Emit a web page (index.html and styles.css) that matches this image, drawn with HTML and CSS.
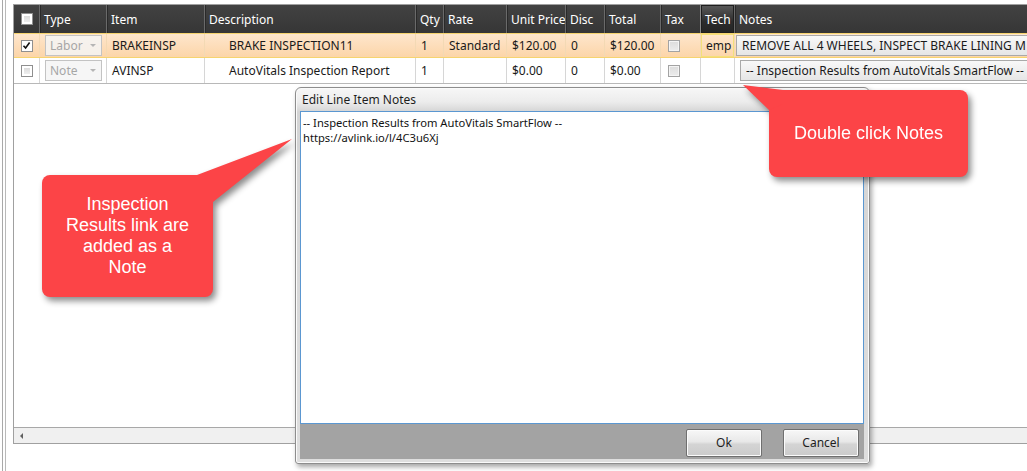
FILE: index.html
```html
<!DOCTYPE html>
<html>
<head>
  <title>Line Items - Edit Notes</title>
  <link rel="stylesheet" href="styles.css">
</head>
<body>
<div class="frame">
  <div class="frame-inner">
    <div class="grid">
      <div class="row head">
        <div class="cell"><span class="chk"></span></div>
        <div class="cell">Type</div>
        <div class="cell">Item</div>
        <div class="cell">Description</div>
        <div class="cell">Qty</div>
        <div class="cell">Rate</div>
        <div class="cell">Unit Price</div>
        <div class="cell">Disc</div>
        <div class="cell">Total</div>
        <div class="cell">Tax</div>
        <div class="cell tech">Tech</div>
        <div class="cell">Notes</div>
      </div>

      <div class="row line selected">
        <div class="cell center">
          <span class="chk checked">
            <svg width="9" height="9" viewBox="0 0 9 9"><path d="M1.5 4.8 L3.6 7 L7.6 1.6" fill="none" stroke="#111" stroke-width="1.6"/></svg>
          </span>
        </div>
        <div class="cell"><span class="combo">Labor</span></div>
        <div class="cell">BRAKEINSP</div>
        <div class="cell desc">BRAKE INSPECTION11</div>
        <div class="cell">1</div>
        <div class="cell">Standard</div>
        <div class="cell">$120.00</div>
        <div class="cell">0</div>
        <div class="cell">$120.00</div>
        <div class="cell"><span class="chk tax"></span></div>
        <div class="cell tech-val">emp</div>
        <div class="cell notes first"><span class="note-btn">REMOVE ALL 4 WHEELS, INSPECT BRAKE LINING M</span></div>
      </div>

      <div class="row line">
        <div class="cell center"><span class="chk"></span></div>
        <div class="cell"><span class="combo">Note</span></div>
        <div class="cell">AVINSP</div>
        <div class="cell desc">AutoVitals Inspection Report</div>
        <div class="cell">1</div>
        <div class="cell"></div>
        <div class="cell">$0.00</div>
        <div class="cell">0</div>
        <div class="cell">$0.00</div>
        <div class="cell"><span class="chk tax"></span></div>
        <div class="cell"></div>
        <div class="cell notes"><span class="note-btn">-- Inspection Results from AutoVitals SmartFlow --</span></div>
      </div>

      <div class="filler"></div>

      <div class="hscroll"><span class="arrow-left"></span></div>
    </div>
  </div>
</div>

<div class="dialog">
  <div class="dialog-title">Edit Line Item Notes</div>
  <div class="notes-text">-- Inspection Results from AutoVitals SmartFlow --<br>https://avlink.io/l/4C3u6Xj</div>
  <div class="dialog-foot">
    <button class="btn">Ok</button>
    <button class="btn">Cancel</button>
  </div>
</div>

<div class="callout callout-right">
  <svg class="pointer" width="50" height="40" viewBox="0 0 50 40"><polygon points="4,3 44,8 44,22 30,28" fill="#fc4447"/></svg>
  <div class="callout-text">Double click Notes</div>
</div>

<div class="callout callout-left">
  <svg class="pointer" width="105" height="75" viewBox="0 0 105 75"><polygon points="100,4 5,40 5,70 21,70 21,67" fill="#fc4447"/></svg>
  <div class="callout-text">Inspection<br>Results link are<br>added as a<br>Note</div>
</div>
</body>
</html>
```

FILE: styles.css
```css
body {
  margin: 0;
  font-family: "Noto Sans", "Open Sans", sans-serif;
  font-size: 12px;
  color: #1a1a1a;
  background: #fff;
  overflow: hidden;
}
.frame {
  margin-left: 2px;
  border-left: 1px solid #a9a9a9;
  padding-left: 2px;
  height: 471px;
}
.frame-inner {
  border-left: 1px solid #b9b9b9;
  padding: 4px 0 0 7px;
  height: 100%;
  box-sizing: border-box;
}
.grid {
  height: 440px;
  box-sizing: border-box;
  border: 1px solid #a0a0a0;
  border-right: none;
  display: flex;
  flex-direction: column;
  overflow: hidden;
}
.row {
  display: grid;
  grid-template-columns: 25px 67px 98px 211px 28px 63px 59px 39px 56px 40px 34px 294px;
  width: 1014px;
}
.cell {
  box-sizing: border-box;
  display: flex;
  align-items: center;
  padding-left: 5px;
  white-space: nowrap;
  overflow: hidden;
  border-left: 1px solid #d6d6d6;
}
.cell:first-child { border-left: none; }
.center { justify-content: center; padding-left: 0; }

/* header */
.head {
  height: 28px;
  background: linear-gradient(#424242, #363636);
  color: #fff;
}
.head .cell {
  border-left: 1px solid #6a6a6a;
  box-shadow: inset 1px 0 0 #2a2a2a;
  padding-left: 4px;
}
.head .cell:first-child {
  border-left: none;
  box-shadow: none;
  justify-content: center;
  padding-left: 0;
}
.head .tech {
  background: linear-gradient(#5a5a5a, #2c2c2c 60%, #242424);
  border-left: 1px solid #8a8a8a;
  box-shadow: inset 0 0 0 1px #1e1e1e;
}

/* body rows */
.line {
  height: 25px;
  box-sizing: border-box;
}
.line + .line {
  height: 26px;
  border-bottom: 1px solid #b8b8b8;
}
.selected {
  background: linear-gradient(#fee6cc, #fcd5a9);
  border-top: 1px solid #f6d46f;
  border-bottom: 1px solid #f6d46f;
}
.selected .cell { border-left-color: #f3d9b4; }
.desc { padding-left: 24px; }
.tech-val { box-shadow: inset 0 0 0 1px #f3e07a; }
.notes { padding-left: 5px; }
.notes.first { padding-left: 1px; }

.chk {
  width: 10px;
  height: 10px;
  border: 1px solid #8f8f8f;
  background: linear-gradient(#d6d6d6, #f4f4f4);
  box-shadow: inset 0 0 0 2px #fff;
  display: inline-flex;
  align-items: center;
  justify-content: center;
}
.chk.checked { background: #fff; box-shadow: none; }
.chk.tax {
  margin-left: 2px;
  border-color: #a3a3a3;
  background: linear-gradient(#dcdcdc, #ececec);
  box-shadow: inset 0 0 0 1px #f4f4f4;
}

.combo {
  width: 57px;
  height: 21px;
  box-sizing: border-box;
  border: 1px solid #c3c3c3;
  background: rgba(244, 244, 244, 0.85);
  color: #a6a6a6;
  padding: 0 5px 0 4px;
  display: flex;
  align-items: center;
  justify-content: space-between;
}
.combo::after {
  content: "";
  border-left: 3px solid transparent;
  border-right: 3px solid transparent;
  border-top: 3px solid #b5b5b5;
}

.note-btn {
  height: 21px;
  width: 300px;
  flex-shrink: 0;
  box-sizing: border-box;
  border: 1px solid #a9a9a9;
  background: linear-gradient(#f8f8f8, #e6e6e6);
  padding-left: 5px;
  display: flex;
  align-items: center;
  overflow: hidden;
}

.filler { flex: 1; }

.hscroll {
  height: 15px;
  border-top: 1px solid #a8a8a8;
  background: #f0f0f0;
  display: flex;
  align-items: center;
  padding-left: 6px;
}
.arrow-left {
  border-top: 3px solid transparent;
  border-bottom: 3px solid transparent;
  border-right: 3px solid #606060;
}

/* dialog */
.dialog {
  position: absolute;
  left: 295px;
  top: 87px;
  width: 575px;
  height: 377px;
  box-sizing: border-box;
  border: 1px solid #8d8d8d;
  border-radius: 6px 6px 3px 3px;
  background: linear-gradient(#f7f7f7, #ececec 14px, #d4d4d4 24px, #dedede);
  box-shadow: inset 0 0 0 1px #fafafa, 2px 3px 5px rgba(0, 0, 0, 0.35);
  padding: 0 5px 4px 4px;
  display: flex;
  flex-direction: column;
}
.dialog-title {
  height: 23px;
  line-height: 24px;
  padding-left: 2px;
  color: #1e1e1e;
}
.notes-text {
  flex: 1;
  background: #fff;
  border: 1px solid #5b97d1;
  padding: 3px 2px;
  font-size: 11.2px;
  line-height: 15px;
  color: #111;
}
.dialog-foot {
  height: 35px;
  background: #a3a3a3;
  display: flex;
  justify-content: flex-end;
  align-items: center;
  gap: 21px;
  padding: 2px 5px 0 0;
  box-sizing: border-box;
}
.btn {
  width: 76px;
  height: 28px;
  border: 1px solid #6f6f6f;
  border-radius: 2px;
  background: linear-gradient(#f7f7f7, #e8e8e8 45%, #d4d4d4 55%, #cbcbcb);
  box-shadow: inset 0 0 0 1px #fbfbfb;
  font-family: "Noto Sans", "Open Sans", sans-serif;
  font-size: 12px;
  color: #1e1e1e;
  padding: 0;
}

/* annotation callouts */
.callout {
  position: absolute;
  background: #fc4447;
  border-radius: 8px;
  color: #fff;
  font-family: "Liberation Sans", Arial, sans-serif;
  font-size: 18px;
  line-height: 21px;
  text-align: center;
  display: flex;
  align-items: center;
  justify-content: center;
  filter: drop-shadow(3px 4px 3px rgba(0, 0, 0, 0.45));
}
.callout .pointer {
  position: absolute;
}
.callout-text { position: relative; }
.callout-right {
  left: 769px;
  top: 90px;
  width: 199px;
  height: 87px;
}
.callout-right .pointer { left: -30px; top: -8px; }
.callout-left {
  left: 42px;
  top: 175px;
  width: 171px;
  height: 122px;
}
.callout-left .pointer { left: 150px; top: -40px; }
```
